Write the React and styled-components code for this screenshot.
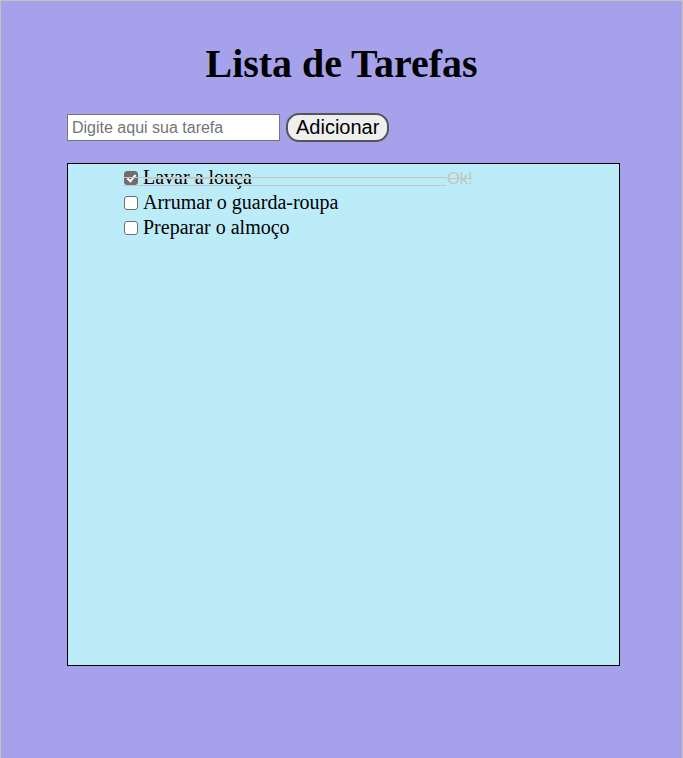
import React, { useState } from "react";
import styled, { createGlobalStyle } from "styled-components";

const Global = createGlobalStyle`
  html, body { margin: 0; padding: 0; background: #a6a1eb; }
  body { font-family: "Liberation Serif", serif; }
`;

const Frame = styled.div`
  box-sizing: border-box;
  width: 683px;
  height: 758px;
  background: #a6a1eb;
  border: 1px solid #c3c3c3;
  border-bottom: none;
  overflow: hidden;
`;

const Title = styled.h1`
  margin: 40px 0 0 0;
  text-align: center;
  font-family: "Liberation Serif", serif;
  font-weight: bold;
  font-size: 39.9px;
  line-height: 45px;
  color: #000;
`;

const Form = styled.div`
  display: flex;
  align-items: center;
  gap: 6px;
  margin: 27px 0 0 66px;
`;

const Input = styled.input`
  box-sizing: border-box;
  width: 213px;
  height: 27px;
  padding: 1px 4px;
  border: 1px solid #767676;
  background: #fff;
  font-family: "Liberation Sans", Arial, sans-serif;
  font-size: 16px;
  &::placeholder { color: #757575; }
`;

const Button = styled.button`
  box-sizing: border-box;
  height: 29px;
  padding: 0 8px;
  border: 2px solid #555;
  border-radius: 13px;
  background: #efefef;
  color: #000;
  font-family: "Liberation Sans", Arial, sans-serif;
  font-size: 20px;
`;

const ListBox = styled.div`
  box-sizing: border-box;
  width: 553px;
  height: 503px;
  margin: 21px 0 0 66px;
  border: 1px solid #000;
  background: #bdecf9;
  padding: 1px 0 0 55px;
`;

const Item = styled.label`
  position: relative;
  display: flex;
  align-items: center;
  height: 25px;
  font-size: 20px;
  color: #000;
`;

const Check = styled.input`
  appearance: none;
  box-sizing: border-box;
  position: relative;
  width: 14px;
  height: 14px;
  margin: 0 5px 0 1px;
  border: 1px solid #6f6f6f;
  border-radius: 3px;
  background: #fff;
  &:checked {
    background: #6f6f6f;
  }
  &:checked::after {
    content: "";
    position: absolute;
    left: 4px;
    top: 1px;
    width: 3px;
    height: 7px;
    border: solid #fff;
    border-width: 0 2px 2px 0;
    transform: rotate(40deg);
  }
`;

const Text = styled.span`
  text-decoration: ${(p) => (p.$done ? "line-through" : "none")};
  text-decoration-color: #c8c8c8;
  white-space: nowrap;
`;

const Strike = styled.span`
  position: absolute;
  left: 0;
  top: 12px;
  width: 323px;
  height: 1px;
  background: #c4c4c4;
`;

const Under = styled.span`
  position: absolute;
  left: 0;
  top: 20px;
  width: 323px;
  height: 1px;
  background: #c4c4c4;
`;

const Ok = styled.span`
  position: absolute;
  left: 324px;
  top: 4px;
  font-family: "Liberation Sans", Arial, sans-serif;
  font-size: 16.5px;
  color: #c4c4c4;
  text-decoration: line-through;
`;

const tasks = [
  { text: "Lavar a louça", done: true },
  { text: "Arrumar o guarda-roupa", done: false },
  { text: "Preparar o almoço", done: false },
];

export default function App() {
  const [value, setValue] = useState("");
  return (
    <>
      <Global />
      <Frame>
        <Title>Lista de Tarefas</Title>
        <Form>
          <Input
            placeholder="Digite aqui sua tarefa"
            value={value}
            onChange={(e) => setValue(e.target.value)}
          />
          <Button>Adicionar</Button>
        </Form>
        <ListBox>
          {tasks.map((t) => (
            <Item key={t.text}>
              <Check type="checkbox" defaultChecked={t.done} />
              <Text $done={t.done}>{t.text}</Text>
              {t.done && (
                <>
                  <Strike />
                  <Under />
                  <Ok>Ok!</Ok>
                </>
              )}
            </Item>
          ))}
        </ListBox>
      </Frame>
    </>
  );
}
